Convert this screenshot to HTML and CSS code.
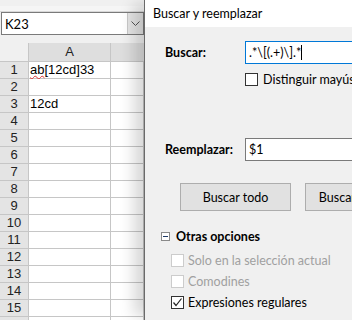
FILE: index.html
```html
<!DOCTYPE html>
<html lang="es">
<head>
  <meta charset="UTF-8" />
  <meta name="viewport" content="width=device-width, initial-scale=1.0"/>
  <title>Buscar y reemplazar</title>
  <link rel="stylesheet" href="styles.css">
</head>
<body>

  <div class="app">
    <div class="sheet">
      <div class="toolbar"></div>
      <div class="namebar">
        <div class="namebox">
          <span class="namebox-text">K23</span>
          <span class="namebox-btn">
            <svg width="9" height="5" viewBox="0 0 9 5"><polyline points="0.5,0.5 4.5,4.5 8.5,0.5" fill="none" stroke="#555" stroke-width="1"/></svg>
          </span>
        </div>
      </div>
      <div class="grid">
        <div class="corner"></div><div class="colhead">A</div><div class="colhead colb"></div>
        <div class="rowhead">1</div><div class="cell"><span class="spell">ab</span>[12cd]33</div><div class="cell"></div>
        <div class="rowhead">2</div><div class="cell"></div><div class="cell"></div>
        <div class="rowhead">3</div><div class="cell">12cd</div><div class="cell"></div>
        <div class="rowhead">4</div><div class="cell"></div><div class="cell"></div>
        <div class="rowhead">5</div><div class="cell"></div><div class="cell"></div>
        <div class="rowhead">6</div><div class="cell"></div><div class="cell"></div>
        <div class="rowhead">7</div><div class="cell"></div><div class="cell"></div>
        <div class="rowhead">8</div><div class="cell"></div><div class="cell"></div>
        <div class="rowhead">9</div><div class="cell"></div><div class="cell"></div>
        <div class="rowhead">10</div><div class="cell"></div><div class="cell"></div>
        <div class="rowhead">11</div><div class="cell"></div><div class="cell"></div>
        <div class="rowhead">12</div><div class="cell"></div><div class="cell"></div>
        <div class="rowhead">13</div><div class="cell"></div><div class="cell"></div>
        <div class="rowhead">14</div><div class="cell"></div><div class="cell"></div>
        <div class="rowhead">15</div><div class="cell"></div><div class="cell"></div>
        <div class="rowhead"></div><div class="cell"></div><div class="cell"></div>
      </div>
    </div>

    <div class="dialog">
      <div class="titlebar">Buscar y reemplazar</div>
      <div class="body">
        <div class="field first">
          <label class="label">Buscar:</label>
          <div class="input active">.*\[(.+)\].*<span class="caret"></span></div>
        </div>
        <div class="check-line">
          <span class="box"></span>
          <span>Distinguir mayúsculas y minúsculas</span>
        </div>
        <div class="field second">
          <label class="label">Reemplazar:</label>
          <div class="input">$1</div>
        </div>
        <div class="buttons">
          <button class="btn">Buscar todo</button>
          <button class="btn">Buscar anterior</button>
        </div>
        <div class="expander">
          <svg width="9" height="9" viewBox="0 0 9 9"><rect x="0.5" y="0.5" width="8" height="8" fill="#fff" stroke="#8a8a8a"/><line x1="2" y1="4.5" x2="7" y2="4.5" stroke="#1e3966"/></svg>
          <span>Otras opciones</span>
        </div>
        <div class="options">
          <div class="opt disabled"><span class="box"></span><span>Solo en la selección actual</span></div>
          <div class="opt disabled"><span class="box"></span><span>Comodines</span></div>
          <div class="opt">
            <span class="box">
              <svg width="11" height="11" viewBox="0 0 11 11"><polyline points="1.5,5.5 4,8.5 9.5,1.5" fill="none" stroke="#222" stroke-width="1.2"/></svg>
            </span>
            <span>Expresiones regulares</span>
          </div>
        </div>
      </div>
    </div>
  </div>

</body>
</html>
```

FILE: styles.css
```css
* { box-sizing: border-box; }
body { margin: 0; background: #f0f0f0; overflow: hidden; }
.app {
  display: flex;
  width: 352px;
  height: 320px;
  overflow: hidden;
}

/* spreadsheet side */
.sheet {
  width: 144px;
  flex: none;
  font-family: "Liberation Sans", Arial, sans-serif;
  font-size: 13px;
  color: #000;
  background: #f0f0f0;
}
.toolbar {
  height: 12px;
  border-top: 6px solid #f0f0f0;
  border-bottom: 1px solid #d8d8d8;
  background: #f5f5f5;
}
.namebar { padding: 0 0 8px 1px; }
.namebox {
  display: flex;
  height: 23px;
  border: 1px solid #7a7a7a;
  background: #fff;
  width: 143px;
}
.namebox-text { flex: 1; padding: 3px 0 0 3px; font-family: Lato, sans-serif; font-size: 13px; }
.namebox-btn {
  width: 16px;
  display: flex;
  align-items: center;
  justify-content: center;
  background: #e5e5e5;
  border-left: 1px solid #c8c8c8;
}
.grid {
  display: grid;
  grid-template-columns: 29px 82px 33px;
  grid-auto-rows: 17px;
  grid-template-rows: 19px;
}
.corner { background: #f0f0f0; border-right: 1px solid #c6c6c6; border-bottom: 1px solid #c6c6c6; }
.colhead {
  background: #dedede;
  border-right: 1px solid #c6c6c6;
  border-bottom: 1px solid #c6c6c6;
  text-align: center;
  line-height: 18px;
  color: #222;
}
.colb { border-right: none; }
.rowhead {
  background: #e4e4e4;
  border-right: 1px solid #c6c6c6;
  border-bottom: 1px solid #c6c6c6;
  text-align: center;
  line-height: 16px;
  color: #222;
}
.cell {
  background: #fff;
  border-right: 1px solid #c6c6c6;
  border-bottom: 1px solid #c6c6c6;
  padding-left: 1px;
  line-height: 16px;
  white-space: nowrap;
}
.spell { text-decoration: underline wavy #e03030; text-decoration-thickness: 1px; }

/* dialog */
.dialog {
  flex: 1;
  min-width: 0;
  border-left: 1px solid #6a6a6a;
  box-shadow: -14px 0 14px -4px rgba(0, 0, 0, 0.16);
  font-family: Lato, "Noto Sans", sans-serif;
  font-size: 12.5px;
  color: #000;
  overflow: hidden;
  position: relative;
}
.titlebar {
  height: 27px;
  background: #fff;
  padding: 6px 0 0 8px;
  white-space: nowrap;
}
.body {
  background: #f0f0f0;
  padding-left: 20px;
  width: 300px;
}
.field {
  display: flex;
  align-items: center;
  height: 23px;
}
.field.first { margin-top: 14px; }
.field.second { margin-top: 52px; }
.label { width: 80px; font-weight: bold; flex: none; }
.input {
  flex: none;
  width: 200px;
  height: 23px;
  border: 1px solid #7a7a7a;
  background: #fff;
  padding: 3px 0 0 3px;
  white-space: nowrap;
}
.input.active { border-color: #0078d7; }
.caret {
  display: inline-block;
  width: 1px;
  height: 15px;
  background: #000;
  vertical-align: -3px;
}
.check-line {
  display: flex;
  align-items: center;
  gap: 5px;
  height: 13px;
  margin: 9px 0 0 80px;
  white-space: nowrap;
}
.box {
  width: 13px;
  height: 13px;
  flex: none;
  border: 1px solid #333;
  background: #fff;
  display: flex;
  align-items: center;
  justify-content: center;
}
.buttons {
  display: flex;
  gap: 14px;
  margin: 22px 0 0 15px;
}
.btn {
  flex: none;
  width: 111px;
  height: 28px;
  background: #e1e1e1;
  border: 1px solid #adadad;
  font-family: Lato, "Noto Sans", sans-serif;
  font-size: 12.5px;
  color: #000;
  padding: 0;
  white-space: nowrap;
}
.expander {
  display: flex;
  align-items: center;
  gap: 6px;
  height: 13px;
  margin: 19px 0 0 -4px;
  font-weight: bold;
}
.options {
  display: flex;
  flex-direction: column;
  gap: 8px;
  margin: 11px 0 0 6px;
}
.opt {
  display: flex;
  align-items: center;
  gap: 4px;
  height: 13px;
  white-space: nowrap;
}
.opt.disabled { color: #a0a0a0; }
.opt.disabled .box { border-color: #cccccc; }
```
